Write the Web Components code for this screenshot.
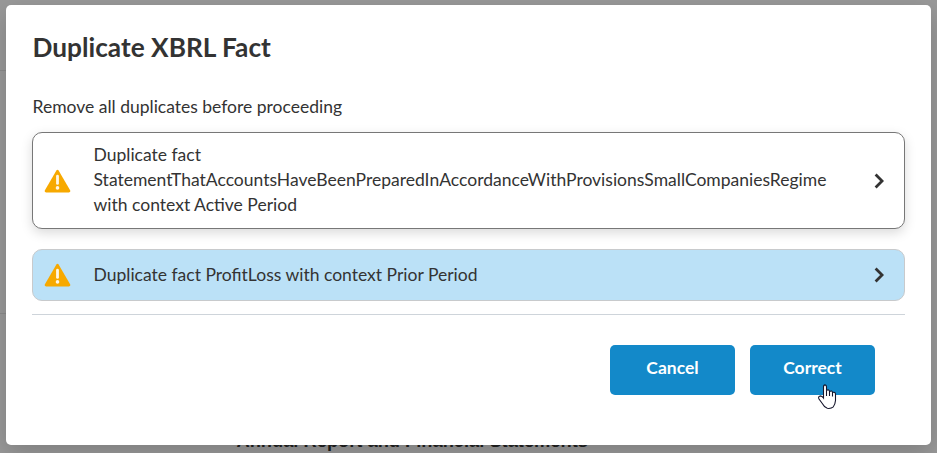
<!DOCTYPE html>
<html lang="en">
<head>
<meta charset="utf-8">
<title>Duplicate XBRL Fact</title>
<style>
html,body{margin:0;height:100%;overflow:hidden}
body{font-family:Lato,"Open Sans",sans-serif;color:#333;background:#999}
</style>
</head>
<body>
<page-backdrop>Annual Report and Financial Statements</page-backdrop>
<modal-dialog>
  <span slot="title">Duplicate XBRL Fact</span>
  <span slot="intro">Remove all duplicates before proceeding</span>
  <fact-card>Duplicate fact StatementThatAccountsHaveBeenPreparedInAccordanceWithProvisionsSmallCompaniesRegime with context Active Period</fact-card>
  <fact-card selected>Duplicate fact ProfitLoss with context Prior Period</fact-card>
  <action-button slot="actions">Cancel</action-button>
  <action-button slot="actions">Correct</action-button>
</modal-dialog>
<hand-pointer></hand-pointer>
<script>
function define(name, html) {
  customElements.define(name, class extends HTMLElement {
    constructor() {
      super();
      this.attachShadow({mode: 'open'}).innerHTML = html;
    }
  });
}

define('page-backdrop', `<style>
:host{display:grid;grid-template-rows:71px 243px 1fr;height:453px;box-sizing:border-box;background:#999}
div{width:200px;border-bottom:1px solid #8b8b8b}
p{margin:0;align-self:end;padding-left:236.5px;font:bold 18.3px/24px "Liberation Sans",Arial,sans-serif;color:#1f1f1f;white-space:nowrap}
</style><div></div><div></div><p><slot></slot></p>`);

define('modal-dialog', `<style>
:host{position:absolute;left:6px;top:5px;width:925px;height:440px;box-sizing:border-box;padding:25px 26px 0;background:#fff;border-radius:5px;box-shadow:0 8px 24px rgba(0,0,0,.18)}
h1{margin:0;padding-left:.5px;font-size:26.25px;line-height:34px;font-weight:700}
p{margin:30px 0 13px;padding-left:.5px;font-size:17.5px;line-height:25px}
.list{display:flex;flex-direction:column;gap:20px}
hr{border:0;border-top:1px solid #ced4da;margin:13px 0 30px}
footer{display:flex;justify-content:flex-end;gap:15px;padding-right:30px}
</style><h1><slot name="title"></slot></h1><p><slot name="intro"></slot></p>
<div class="list"><slot></slot></div><hr><footer><slot name="actions"></slot></footer>`);

define('fact-card', `<style>
:host{display:flex;align-items:center;box-sizing:border-box;height:97px;padding:0 20px 0 11px;border:1px solid #777;border-radius:10px;background:#fff;box-shadow:0 4px 12px rgba(0,0,0,.15)}
:host([selected]){height:52px;background:#bbe1f7;border-color:#c8cacc;box-shadow:none}
.text{flex:1;min-width:0;margin:0 20px 0 22.5px;font-size:17.52px;line-height:25px;padding-bottom:2px}
svg{display:block;flex:none}
</style><svg width="27" height="24" viewBox="0 0 27 24"><path fill="#f7a900" d="M12.4 1.6Q13.5-.1 14.6 1.6L26.1 21.3Q26.9 23.5 24.8 23.5H2.2Q.1 23.5.9 21.3Z"/><path d="M13.5 7.2V14.4" stroke="#fff" stroke-opacity=".9" stroke-width="2.8" stroke-linecap="round"/><circle cx="13.5" cy="18.9" r="1.8" fill="#fff" fill-opacity=".9"/></svg>
<div class="text"><slot></slot></div>
<svg width="10" height="16" viewBox="0 0 10 16"><path d="M1.6 1.5L8.1 8L1.6 14.5" fill="none" stroke="#333" stroke-width="2.8"/></svg>`);

define('action-button', `<style>
:host{display:block}
button{display:block;box-sizing:border-box;width:125px;height:50px;border:0;border-radius:5px;background:#1389c9;color:#fff;font:700 17.5px/24px Lato,sans-serif;padding:0 0 4px}
</style><button><slot></slot></button>`);

define('hand-pointer', `<style>
:host{display:block;position:absolute;left:818px;top:384px;width:20px;height:26px}
svg{display:block}
</style><svg width="20" height="26" viewBox="0 0 20 26"><path d="M5.5 14V3.1Q5.5.9 7 .9Q8.5.9 8.5 3V6.3Q11.2 5 11.5 7.5Q14.2 6.1 14.5 8.5Q17.6 7.5 17.5 10.5V16.5Q17.2 20.2 15.3 22.8Q13 24.9 9.3 24.3Q6.3 23.3 5 20.5L1 15Q-.3 12.2 2.9 11.9Q4.4 12.4 5.5 14Z" fill="#fff" stroke="#15152b" stroke-width="1.1"/><path d="M8.5 6.5V12M11.5 7.5V12M14.5 8.5V12.5" fill="none" stroke="#15152b" stroke-width="1.1"/></svg>`);
</script>
</body>
</html>
